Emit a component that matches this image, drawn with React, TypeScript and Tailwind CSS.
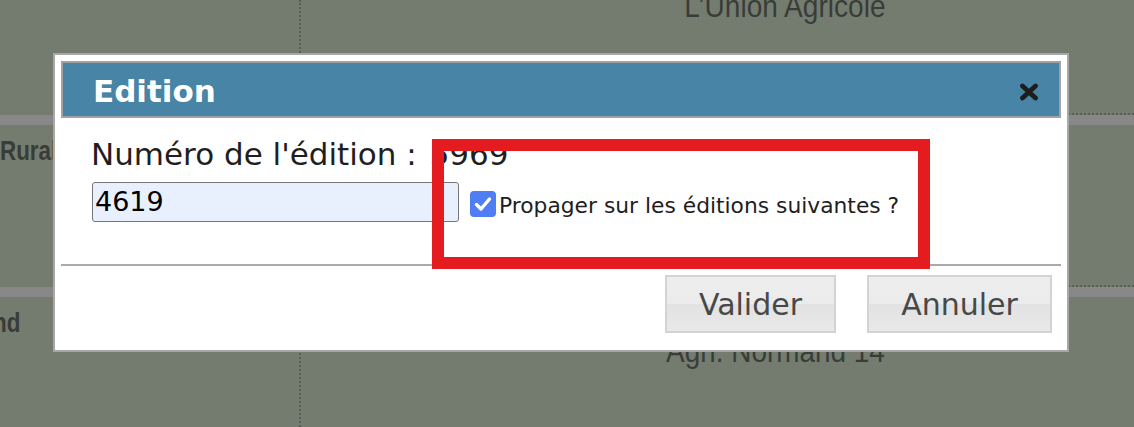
const NARROW = "font-['Liberation_Sans',Arial,sans-serif]";

function CloseIcon() {
  return (
    <svg width="20" height="18" viewBox="0 0 20 18" className="mt-[20px] shrink-0">
      <path d="M3.5 3 L16.5 15 M16.5 3 L3.5 15" stroke="#1d1d1d" strokeWidth="4.8" strokeLinecap="round" fill="none" />
    </svg>
  );
}

function CheckBox() {
  return (
    <span className="mt-[9px] ml-[11px] flex h-[26px] w-[26px] shrink-0 items-center justify-center rounded-[4px] bg-[#4f7df3]">
      <svg width="26" height="26" viewBox="0 0 26 26">
        <path d="M6.5 13.5 L11 18 L19.5 8" stroke="#fff" strokeWidth="3.4" strokeLinecap="round" strokeLinejoin="round" fill="none" />
      </svg>
    </span>
  );
}

function DialogButton({ label, width }: { label: string; width: string }) {
  return (
    <button
      className={`${width} flex h-[58px] items-center justify-center border-2 border-[#d3d3d3] bg-[linear-gradient(#eeeeee_0%,#ebebeb_50%,#e2e2e2_51%,#e9e9e9_100%)] text-[30px] leading-[35px] text-[#484848]`}
    >
      {label}
    </button>
  );
}

function EditionDialog() {
  return (
    <div className="absolute left-[53px] top-[53px] flex h-[299px] w-[1016px] flex-col border-2 border-[#a8a8a8] bg-white p-[6px] font-['DejaVu_Sans',Verdana,sans-serif]">
      <div className="flex h-[57px] shrink-0 items-start justify-between border-2 border-[#a2a2a2] bg-[#4784a6] pl-[30px] pr-[20px]">
        <span className="pt-[10px] text-[31px] font-bold leading-[36px] text-white">Edition</span>
        <CloseIcon />
      </div>

      <div className="h-[146px] shrink-0 pl-[30px] pt-[18px]">
        <div className="h-[36px] text-[31px] leading-[36px] text-[#1f1f1f]">
          Numéro de l'édition : <span className="ml-[3px]">5969</span>
        </div>
        <div className="mt-[10px] flex items-start">
          <input
            readOnly
            value="4619"
            className="ml-[1px] h-[40px] w-[367px] rounded-[3px] border border-[#767676] bg-[#e8f0fe] px-[2px] text-[27px] text-black outline-none"
          />
          <CheckBox />
          <label className="ml-[3px] mt-[11px] text-[21.8px] leading-[25px] text-[#1e1e1e]">
            Propager sur les éditions suivantes ?
          </label>
        </div>
      </div>

      <div className="h-[2px] shrink-0 bg-[#a9a9a9]" />

      <div className="flex justify-end gap-[31px] pr-[9px] pt-[9px]">
        <DialogButton label="Valider" width="w-[171px]" />
        <DialogButton label="Annuler" width="w-[185px]" />
      </div>
    </div>
  );
}

function Separator() {
  return (
    <>
      <div className="flex h-[2px] shrink-0">
        <div className="w-[301px] border-r-2 border-dotted border-[#5a5d58]" />
        <div className="flex-1 border-t-2 border-dotted border-[#5a5d58]" />
      </div>
      <div className="h-[10px] shrink-0 bg-[#888888]" />
    </>
  );
}

function BackgroundTable() {
  return (
    <div className={`flex h-full flex-col ${NARROW} text-[#3a3c39]`}>
      <div className="flex h-[113px] shrink-0">
        <div className="w-[301px] shrink-0 border-r-2 border-dotted border-[#5a5d58]" />
        <div className="-mt-[10px] w-[594px] pr-[10px] text-right text-[32px] leading-[32px] whitespace-nowrap">
          <span className="inline-block origin-right scale-x-[0.877]">L’Union Agricole</span>
        </div>
      </div>
      <Separator />
      <div className="flex h-[160px] shrink-0">
        <div className="w-[301px] shrink-0 overflow-hidden border-r-2 border-dotted border-[#5a5d58] pt-[10px] text-[28px] font-bold leading-[32px] whitespace-nowrap">
          <span className="inline-block origin-left scale-x-[0.8]">Rural</span>
        </div>
      </div>
      <Separator />
      <div className="flex flex-1">
        <div className="w-[301px] shrink-0 overflow-hidden border-r-2 border-dotted border-[#5a5d58] pt-[10px] text-[28px] font-bold leading-[32px] whitespace-nowrap">
          <span className="-ml-[78px] inline-block origin-left scale-x-[0.8]">Normand</span>
        </div>
        <div className="mt-[38px] w-[594px] pr-[10px] text-right text-[32px] leading-[32px] whitespace-nowrap">
          <span className="inline-block origin-right scale-x-[0.872]">Agri. Normand 14</span>
        </div>
      </div>
    </div>
  );
}

export default function App() {
  return (
    <div className="relative h-[427px] w-[1134px] overflow-hidden bg-[#737c6f]">
      <BackgroundTable />
      <EditionDialog />
      <div className="pointer-events-none absolute left-[432px] top-[139px] h-[130px] w-[498px] border-[12px] border-[#e41c1f]" />
    </div>
  );
}
